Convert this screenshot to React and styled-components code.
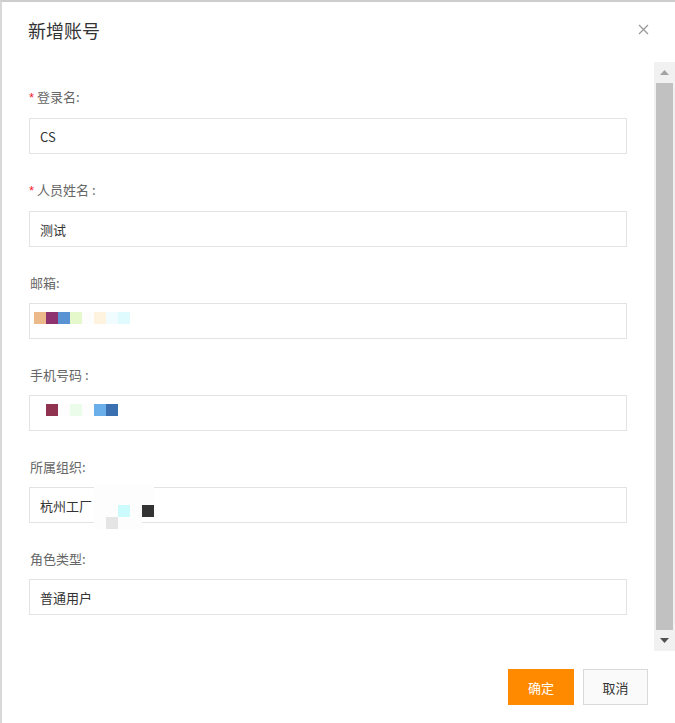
import React from "react"
import styled, { createGlobalStyle } from "styled-components"

const GlobalStyle = createGlobalStyle`
  html, body {
    margin: 0;
    padding: 0;
    background: #fff;
  }
  body {
    font-family: "Noto Sans CJK SC", "Noto Sans", "Liberation Sans", sans-serif;
  }
`

const Dialog = styled.div`
  box-sizing: border-box;
  width: 675px;
  height: 723px;
  border-top: 2px solid #cdcdcd;
  border-left: 2px solid #d8d8d8;
  display: flex;
  flex-direction: column;
  background: #fff;
`

const Header = styled.div`
  height: 60px;
  flex: none;
  display: flex;
  align-items: flex-start;
  justify-content: space-between;
  padding: 0 25px 0 26px;
  box-sizing: border-box;
`

const Title = styled.h2`
  margin: 17px 0 0;
  font-size: 18px;
  font-weight: 400;
  line-height: 22px;
  color: #333;
`

const Close = styled.button`
  margin-top: 20px;
  border: none;
  background: none;
  padding: 0;
  width: 14px;
  height: 14px;
  cursor: pointer;
  display: flex;
  align-items: center;
  justify-content: center;
`

const Body = styled.div`
  height: 589px;
  flex: none;
  display: flex;
`

const Content = styled.div`
  flex: 1;
  padding: 25px 27px 0 27px;
  overflow: hidden;
`

const Field = styled.div`
  margin-bottom: 26px;
`

const Label = styled.div`
  font-size: 13px;
  line-height: 20px;
  color: #666;
  margin-bottom: 10px;
  margin-left: ${({ required }) => (required ? "0" : "1px")};
`

const Star = styled.span`
  color: #f5222d;
  margin-right: 3px;
  font-family: "Liberation Sans", sans-serif;
`

const InputBox = styled.div`
  position: relative;
  box-sizing: border-box;
  height: 36px;
  border: 1px solid #e3e3e3;
  padding: 0 10px;
  display: flex;
  align-items: center;
  font-size: 13px;
  color: #333;
`

const Mosaic = styled.div`
  position: absolute;
  left: ${({ left }) => left}px;
  top: ${({ top }) => top}px;
  display: grid;
  grid-template-columns: repeat(${({ cols }) => cols}, 12px);
  grid-template-rows: ${({ rows }) => rows};
`

const Cell = styled.span`
  background: ${({ color }) => color};
`

const Scrollbar = styled.div`
  width: 21px;
  flex: none;
  background: #f1f1f1;
  display: flex;
  flex-direction: column;
  align-items: center;
`

const Arrow = styled.div`
  height: 21px;
  flex: none;
  width: 100%;
  display: flex;
  align-items: center;
  justify-content: center;
`

const Thumb = styled.div`
  flex: 1;
  width: 17px;
  background: #c1c1c1;
`

const Footer = styled.div`
  flex: 1;
  display: flex;
  justify-content: flex-end;
  align-items: flex-start;
  gap: 9px;
  padding: 18px 27px 0 0;
`

const Button = styled.button`
  box-sizing: border-box;
  height: 36px;
  width: ${({ primary }) => (primary ? "66px" : "65px")};
  font-family: inherit;
  font-size: 13px;
  border: 1px solid ${({ primary }) => (primary ? "#ff8a00" : "#d9d9d9")};
  background: ${({ primary }) => (primary ? "#ff8a00" : "#fafafa")};
  color: ${({ primary }) => (primary ? "#fff" : "#333")};
  cursor: pointer;
  padding: 0;
`

const W = "#fdfdfd"

const fields = [
  { label: "登录名:", value: "CS", required: true },
  { label: "人员姓名 :", value: "测试", required: true },
  {
    label: "邮箱:",
    value: "",
    mosaic: {
      left: 4,
      top: 8,
      cols: 8,
      rows: "12px",
      cells: ["#ecb98a", "#8e3270", "#5a93d4", "#e4f8cc", W, "#fdf3df", "#f0fcff", "#e0fbfe"],
    },
  },
  {
    label: "手机号码 :",
    value: "",
    mosaic: {
      left: 16,
      top: 8,
      cols: 6,
      rows: "12px",
      cells: ["#8f3350", W, "#ebfdea", W, "#6aaeea", "#3a6fb0"],
    },
  },
  {
    label: "所属组织:",
    value: "杭州工厂",
    mosaic: {
      left: 64,
      top: -4,
      cols: 5,
      rows: "9px 12px 12px 12px",
      cells: [
        W, W, W, W, W,
        W, W, W, W, W,
        W, W, "#ccfbfe", W, "#333333",
        W, "#e5e5e5", W, W, "transparent",
      ],
    },
  },
  { label: "角色类型:", value: "普通用户" },
]

export default function App() {
  return (
    <>
      <GlobalStyle />
      <Dialog>
        <Header>
          <Title>新增账号</Title>
          <Close aria-label="关闭">
            <svg width="11" height="11" viewBox="0 0 11 11">
              <path d="M1 1L10 10M10 1L1 10" stroke="#9a9a9a" strokeWidth="1.3" />
            </svg>
          </Close>
        </Header>
        <Body>
          <Content>
            {fields.map(f => (
              <Field key={f.label}>
                <Label required={f.required}>
                  {f.required && <Star>*</Star>}
                  {f.label}
                </Label>
                <InputBox>
                  {f.value}
                  {f.mosaic && (
                    <Mosaic left={f.mosaic.left} top={f.mosaic.top} cols={f.mosaic.cols} rows={f.mosaic.rows}>
                      {f.mosaic.cells.map((c, i) => (
                        <Cell key={i} color={c} />
                      ))}
                    </Mosaic>
                  )}
                </InputBox>
              </Field>
            ))}
          </Content>
          <Scrollbar>
            <Arrow>
              <svg width="9" height="5" viewBox="0 0 9 5">
                <path d="M4.5 0L9 5H0Z" fill="#a3a3a3" />
              </svg>
            </Arrow>
            <Thumb />
            <Arrow>
              <svg width="9" height="5" viewBox="0 0 9 5">
                <path d="M0 0H9L4.5 5Z" fill="#505050" />
              </svg>
            </Arrow>
          </Scrollbar>
        </Body>
        <Footer>
          <Button primary>确定</Button>
          <Button>取消</Button>
        </Footer>
      </Dialog>
    </>
  )
}
